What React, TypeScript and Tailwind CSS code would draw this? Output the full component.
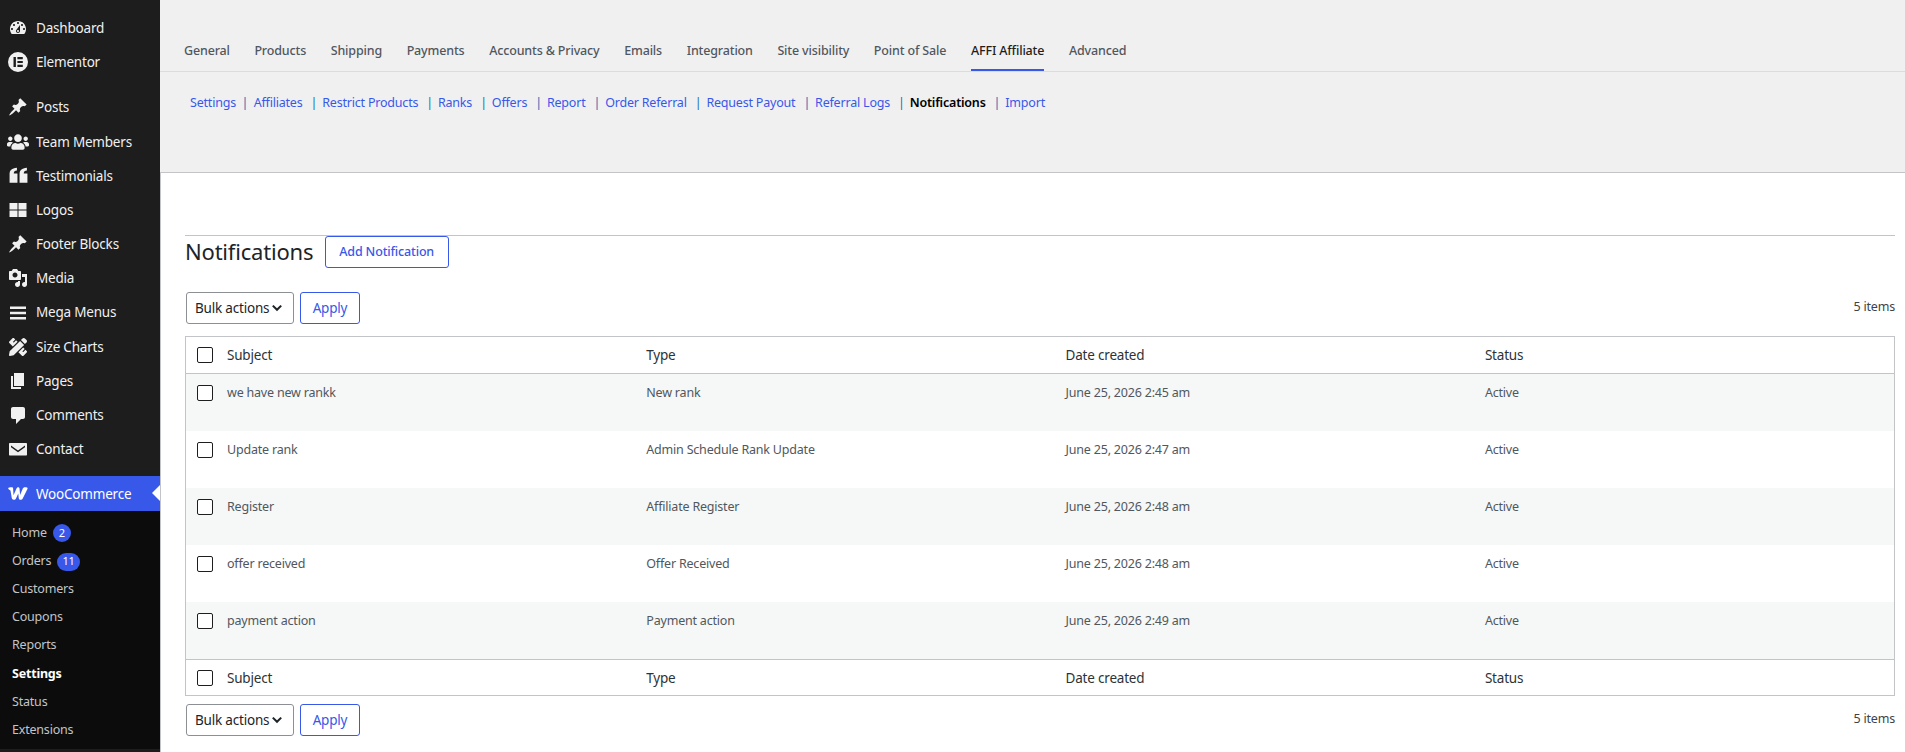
import React from "react";
import { FaPencilRuler, FaUsers } from "react-icons/fa";

const Ic = ({ d, size = 20 }: { d: string; size?: number }) => (
  <svg viewBox="0 0 20 20" width={size} height={size} fill="currentColor" fillRule="evenodd"><path d={d} /></svg>
);

const P = {
  dash: "M3.76 16h12.48c1.1-1.37 1.76-3.11 1.76-5 0-4.42-3.58-8-8-8s-8 3.58-8 8c0 1.89.66 3.63 1.76 5zM10 4c.55 0 1 .45 1 1s-.45 1-1 1-1-.45-1-1 .45-1 1-1zM6 6c.55 0 1 .45 1 1s-.45 1-1 1-1-.45-1-1 .45-1 1-1zm8 0c.55 0 1 .45 1 1s-.45 1-1 1-1-.45-1-1 .45-1 1-1zm-5.37 5.55L12 7v6c0 1.1-.9 2-2 2s-2-.9-2-2c0-.57.24-1.08.63-1.45zM4 10c.55 0 1 .45 1 1s-.45 1-1 1-1-.45-1-1 .45-1 1-1zm12 0c.55 0 1 .45 1 1s-.45 1-1 1-1-.45-1-1 .45-1 1-1zm-5 3c0-.55-.45-1-1-1s-1 .45-1 1 .45 1 1 1 1-.45 1-1z",
  pin: "M10.44 3.02l1.82-1.82 6.36 6.35-1.83 1.82c-1.05-.68-2.48-.57-3.41.36l-.75.75c-.92.93-1.04 2.35-.35 3.41l-1.83 1.82-2.41-2.41-2.8 2.79c-.42.42-3.38 2.71-3.8 2.29s1.86-3.39 2.28-3.81l2.79-2.79L4.1 9.36l1.83-1.82c1.05.69 2.48.57 3.41-.36l.75-.75c.93-.92 1.04-2.35.35-3.41z",
  quote: "M1.5 8.5C1.5 5 3.5 3 8.5 2.6v2.6c-2 .2-3 1-3 2.8h3.5v9H1.5V8.5zm9.5 0c0-3.5 2-5.5 7-5.9v2.6c-2 .2-3 1-3 2.8h3.5v9H11V8.5z",
  grid: "M1.5 3h8v6.5h-8V3zm9 0h8v6.5h-8V3zm-9 7.5h8V17h-8v-6.5zm9 0h8V17h-8v-6.5z",
  media: "M13 11V4c0-.55-.45-1-1-1h-1.67L9 1H5L3.67 3H2c-.55 0-1 .45-1 1v7c0 .55.45 1 1 1h10c.55 0 1-.45 1-1zM7 4.5c1.38 0 2.5 1.12 2.5 2.5S8.38 9.5 7 9.5 4.5 8.38 4.5 7 5.62 4.5 7 4.5zM14 6h5v10.5c0 1.38-1.12 2.5-2.5 2.5S14 17.88 14 16.5s1.12-2.5 2.5-2.5c.17 0 .34.02.5.05V9h-3V6zm-4 8.05V13h2v3.5c0 1.38-1.12 2.5-2.5 2.5S7 17.88 7 16.5 8.12 14 9.5 14c.17 0 .34.02.5.05z",
  menu: "M2 3.5h16v2.4H2V3.5zm0 5.3h16v2.4H2V8.8zm0 5.3h16v2.4H2v-2.4z",
  page: "M6 15V2h10v13H6zm-1 1h8v2H3V5h2v11z",
  comment: "M5 2h10c1.1 0 2 .9 2 2v8c0 1.1-.9 2-2 2h-2l-5 5v-5H5c-1.1 0-2-.9-2-2V4c0-1.1.9-2 2-2z",
  mail: "M2 4h16c.6 0 1 .4 1 1v10.5c0 .6-.4 1-1 1H2c-.6 0-1-.4-1-1V5c0-.6.4-1 1-1zm1 2.4v1.8l7 5 7-5V6.4l-7 5-7-5z",
};

const Elementor = () => (
  <svg viewBox="0 0 20 20" width="20" height="20" fill="currentColor" fillRule="evenodd">
    <path d="M10 0a10 10 0 1 0 0 20 10 10 0 0 0 0-20zM5.5 5h2.4v10H5.5V5zm3.9 0h5.4v2.2H9.4V5zm0 3.9h5.4v2.2H9.4V8.9zm0 3.9h5.4V15H9.4v-2.2z" />
  </svg>
);

const Woo = () => (
  <svg viewBox="0 0 22 14" width="20" height="13" fill="currentColor">
    <path d="M0.5 0.8c.5-.6 1.2-.8 2-.8h1.9c.8 0 1.2.4 1.2 1.2l.5 7.6 3.1-7c.4-.9 1-1.6 2-1.6.9 0 1.4.6 1.5 1.5l.6 7 3-7.2C16.7.7 17.4 0 18.5 0h1.6c1.2 0 1.8 1 1.3 2l-5.2 10.4c-.6 1.1-1.5 1.6-2.4 1.6-1.2 0-1.9-.8-2-2l-.5-5-2.4 5.2c-.5 1.1-1.3 1.8-2.5 1.8-1.3 0-2.1-.9-2.3-2.2L2.7 3.6 1.4 3C.3 2.5 0 1.5.5.8z" />
  </svg>
);

const menu: [string, React.ReactNode, string][] = [
  ["Dashboard", <Ic d={P.dash} />, ""],
  ["Elementor", <Elementor />, "mb-[11px]"],
  ["Posts", <Ic d={P.pin} />, ""],
  ["Team Members", <FaUsers size={22} />, ""],
  ["Testimonials", <Ic d={P.quote} size={21} />, ""],
  ["Logos", <Ic d={P.grid} size={20} />, ""],
  ["Footer Blocks", <Ic d={P.pin} />, ""],
  ["Media", <Ic d={P.media} />, ""],
  ["Mega Menus", <Ic d={P.menu} size={20} />, ""],
  ["Size Charts", <FaPencilRuler size={18} />, ""],
  ["Pages", <Ic d={P.page} />, ""],
  ["Comments", <Ic d={P.comment} />, ""],
  ["Contact", <Ic d={P.mail} />, ""],
];

const sub: [string, string | null][] = [
  ["Home", "2"], ["Orders", "11"], ["Customers", null], ["Coupons", null],
  ["Reports", null], ["Settings", null], ["Status", null], ["Extensions", null],
];

const tabs = ["General", "Products", "Shipping", "Payments", "Accounts & Privacy", "Emails", "Integration", "Site visibility", "Point of Sale", "AFFI Affiliate", "Advanced"];
const links = ["Settings", "Affiliates", "Restrict Products", "Ranks", "Offers", "Report", "Order Referral", "Request Payout", "Referral Logs", "Notifications", "Import"];
const rows = [
  ["we have new rankk", "New rank", "June 25, 2026 2:45 am"],
  ["Update rank", "Admin Schedule Rank Update", "June 25, 2026 2:47 am"],
  ["Register", "Affiliate Register", "June 25, 2026 2:48 am"],
  ["offer received", "Offer Received", "June 25, 2026 2:48 am"],
  ["payment action", "Payment action", "June 25, 2026 2:49 am"],
];

const Check = () => <span className="block w-4 h-4 shrink-0 rounded-[2px] border border-[#1e1e1e] bg-white" />;

const Toolbar = ({ className }: { className: string }) => (
  <div className={`flex items-center ${className}`}>
    <div className="w-[108px] h-[32px] border border-[#8c8f94] rounded-[3px] bg-white flex items-center pl-[8px] text-[#1d2327] text-[13.5px] tracking-[-0.2px]">
      <span>Bulk actions</span>
      <svg viewBox="0 0 20 20" width="12" height="12" className="ml-[2px]"><path d="M3 6l7 7 7-7" fill="none" stroke="#1d2327" strokeWidth="3.4" /></svg>
    </div>
    <button className="ml-[6px] w-[60px] h-[32px] border border-[#3858e9] rounded-[3px] bg-white text-[#3858e9] text-[13.5px] tracking-[-0.2px]">Apply</button>
    <span className="ml-auto pb-[2px] text-[12.5px] tracking-[-0.2px] text-[#3c434a]">5 items</span>
  </div>
);

const Head = ({ cls }: { cls: string }) => (
  <div className={`flex items-center bg-white text-[13.5px] tracking-[-0.2px] text-[#2c3338] ${cls}`}>
    <div className="w-[41px] pl-[11px] shrink-0"><Check /></div>
    {["Subject", "Type", "Date created", "Status"].map((h) => (
      <div key={h} className="w-[419.3px] shrink-0">{h}</div>
    ))}
  </div>
);

export default function App() {
  return (
    <div className="flex w-[1905px] h-[752px] overflow-hidden bg-white" style={{ fontFamily: '"Noto Sans", sans-serif' }}>
      <aside className="w-[160px] shrink-0 bg-[#1d1d1d] text-[13.5px] tracking-[-0.2px] text-[#f0f0f1] flex flex-col pt-[11px]">
        {menu.map(([label, icon, extra]) => (
          <div key={label} className={`h-[34.2px] flex items-center shrink-0 ${extra}`}>
            <span className="w-[36px] flex justify-center shrink-0 text-[#f0f0f1]">{icon}</span>
            <span>{label}</span>
          </div>
        ))}
        <div className="relative mt-[10px] h-[35px] bg-[#3858e9] flex items-center text-white shrink-0">
          <span className="w-[36px] flex justify-center shrink-0"><Woo /></span>
          <span>WooCommerce</span>
          <span className="absolute right-0 top-[9px] w-0 h-0 border-y-[8px] border-y-transparent border-r-[8px] border-r-white" />
        </div>
        <div className="bg-[#0c0c0c] h-[238px] pt-[8px] shrink-0 text-[12.5px] text-[#c3c4c7]">
          {sub.map(([label, badge]) => (
            <div key={label} className={`h-[28.1px] pl-[12px] flex items-center ${label === "Settings" ? "font-bold text-white" : ""}`}>
              <span>{label}</span>
              {badge && <span className="ml-[6px] h-[18px] min-w-[18px] px-[5px] rounded-full bg-[#3858e9] text-white text-[11px] flex items-center justify-center">{badge}</span>}
            </div>
          ))}
        </div>
      </aside>
      <main className="flex-1 min-w-0 flex flex-col">
        <div className="h-[173px] shrink-0 bg-[#f0f0f1] border-b border-[#c3c4c7]">
          <nav className="h-[72px] border-b border-[#dcdcde] pl-[24px] flex items-end gap-[24.6px]">
            {tabs.map((t) => (
              <span key={t} className={`h-[40px] pt-[11px] text-[12.5px] tracking-[-0.15px] font-medium border-b-2 ${t === "AFFI Affiliate" ? "text-[#1e1e1e] border-[#3858e9]" : "text-[#50575e] border-transparent"}`}>{t}</span>
            ))}
          </nav>
          <div className="pl-[30px] pt-[18px] flex items-center text-[12.5px] tracking-[-0.2px] h-[58px] pb-[14px]">
            {links.map((l, i) => (
              <span key={l} className="flex items-center">
                {i > 0 && <span className={`text-[#2271b1] ${i === 1 ? "pl-[5.5px] pr-[5.5px]" : "pl-[8px] pr-[5px]"}`}>|</span>}
                <span className={l === "Notifications" ? "font-semibold text-black" : "text-[#3858e9]"}>{l}</span>
              </span>
            ))}
          </div>
        </div>
        <div className="border-l border-[#c3c4c7] pl-[24px] pr-[10px] pt-[62px] flex-1">
          <div className="border-t border-[#c3c4c7] h-[33px] flex items-center">
            <h1 className="text-[22px] tracking-[-0.2px] pb-[2px] text-[#1d2327] leading-none">Notifications</h1>
            <button className="ml-[11.4px] h-[32px] w-[124px] border border-[#3858e9] rounded-[3px] text-[#3858e9] text-[12.5px] tracking-[-0.15px] font-medium bg-white">Add Notification</button>
          </div>
          <Toolbar className="mt-[24px] ml-[1px]" />
          <div className="mt-[12px] border border-[#c3c4c7] text-[12.5px] tracking-[-0.2px] text-[#50575e]">
            <Head cls="h-[37px] border-b border-[#c3c4c7]" />
            {rows.map((r, i) => (
              <div key={r[0]} className={`flex h-[57px] pt-[10px] ${i % 2 === 0 ? "bg-[#f6f7f7]" : "bg-white"}`}>
                <div className="w-[41px] pl-[11px] pt-[1px] shrink-0"><Check /></div>
                <div className="w-[419.3px] shrink-0">{r[0]}</div>
                <div className="w-[419.3px] shrink-0">{r[1]}</div>
                <div className="w-[419.3px] shrink-0">{r[2]}</div>
                <div className="w-[419.3px] shrink-0">Active</div>
              </div>
            ))}
            <Head cls="h-[36px] pt-[1px] border-t border-[#c3c4c7]" />
          </div>
          <Toolbar className="mt-[8px] ml-[1px]" />
        </div>
      </main>
    </div>
  );
}
